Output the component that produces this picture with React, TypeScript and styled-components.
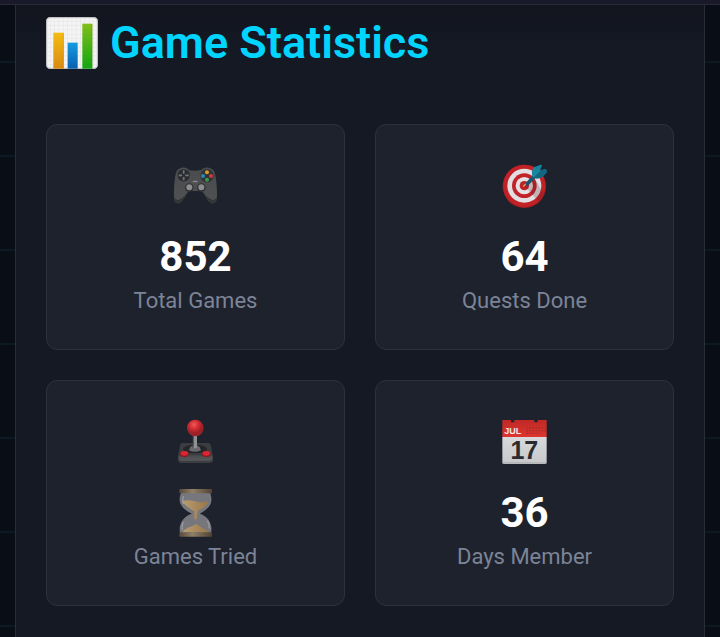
import type { ReactNode } from "react";
import styled, { createGlobalStyle } from "styled-components";

const GlobalStyle = createGlobalStyle`
  * {
    box-sizing: border-box;
  }
  body {
    margin: 0;
    background-color: #090d16;
    font-family: Roboto, sans-serif;
  }
  h2,
  p {
    margin: 0;
  }
`;

const Page = styled.div`
  display: flex;
  flex-direction: column;
  min-height: 100vh;
  background: repeating-linear-gradient(
    to bottom,
    #090d16 0,
    #090d16 61px,
    #0c1922 61px,
    #0c1922 63px,
    #090d16 63px,
    #090d16 94px
  );
`;

const TopBar = styled.header`
  height: 5px;
  background-color: #1a1929;
  border-bottom: 1px solid #2b2b38;
`;

const Panel = styled.main`
  flex: 1;
  margin: 0 15px;
  padding: 12px 30px 30px;
  background: linear-gradient(to bottom, #12141e 0, #141923 44px);
  border: solid #2a2d37;
  border-width: 0 1px;
`;

const Title = styled.h2`
  display: flex;
  align-items: center;
  gap: 12px;
  margin-bottom: 55px;
  color: #00d4ff;
  font-size: 45px;
  line-height: 52px;
  font-weight: 600;
`;

const StatsGrid = styled.section`
  display: grid;
  grid-template-columns: repeat(2, 1fr);
  gap: 30px;
`;

const StatCard = styled.div`
  display: flex;
  flex-direction: column;
  align-items: center;
  padding: 36px 30px 34px;
  background-color: #1e222d;
  border: 1px solid #2d313b;
  border-radius: 11px;
`;

const Icon = styled.svg<{ $size?: number; $faded?: boolean }>`
  display: block;
  flex: none;
  width: ${(props) => props.$size ?? 48}px;
  height: ${(props) => props.$size ?? 48}px;
  opacity: ${(props) => (props.$faded ? 0.8 : 1)};
`;

const StatValue = styled.div`
  margin-top: 24px;
  color: #fff;
  font-size: 42px;
  line-height: 48px;
  font-weight: 700;
`;

const StatLabel = styled.p`
  margin-top: 6px;
  color: #7c8497;
  font-size: 22px;
  line-height: 28px;
`;

function ChartIcon() {
  return (
    <Icon $size={52} viewBox="17 20 156 156" aria-hidden="true">
      <defs>
        <linearGradient id="barYellow" x2="0" y2="1">
          <stop stopColor="#f5bd12" />
          <stop offset="1" stopColor="#d98a12" />
        </linearGradient>
        <linearGradient id="barBlue" x2="0" y2="1">
          <stop stopColor="#159ce0" />
          <stop offset="1" stopColor="#0860b0" />
        </linearGradient>
        <linearGradient id="barGreen" x2="0" y2="1">
          <stop stopColor="#80bf18" />
          <stop offset="1" stopColor="#12a512" />
        </linearGradient>
        <pattern id="chartGrid" x="18" y="21" width="13" height="13" patternUnits="userSpaceOnUse">
          <path d="M0 12.5H13M12.5 0V13" stroke="#dcdcde" strokeWidth="1.5" />
        </pattern>
      </defs>
      <rect x="18" y="21" width="154" height="154" rx="11" fill="#f4f4f5" />
      <rect x="18" y="21" width="154" height="154" rx="11" fill="url(#chartGrid)" />
      <rect x="19" y="22" width="152" height="152" rx="10" fill="none" stroke="#c0c0c3" strokeWidth="3" />
      <rect x="39" y="67" width="31" height="108" fill="url(#barYellow)" />
      <rect x="82" y="97" width="30" height="78" fill="url(#barBlue)" />
      <rect x="126" y="40" width="30" height="135" fill="url(#barGreen)" />
      <path d="M69 68V175M155 41V175" stroke="#785c18" strokeWidth="2" opacity="0.4" />
    </Icon>
  );
}

function GamepadIcon() {
  return (
    <Icon viewBox="36 33 144 144" aria-hidden="true">
      <defs>
        <linearGradient id="padBody" x2="0" y2="1">
          <stop stopColor="#4a4b4d" />
          <stop offset="1" stopColor="#505152" />
        </linearGradient>
      </defs>
      <path
        d="M50 63C57 50 81 49 87 60Q105 64 124 60C130 49 154 50 162 63C168 77 171 105 171 139C171 153 166 160 158 160C149 160 141 148 133 132Q126 121 118 123H94Q86 121 79 132C71 148 63 160 54 160C46 160 41 153 42 139C42 106 44 78 50 63Z"
        fill="url(#padBody)"
      />
      <path d="M42 140Q43 160 54 160Q65 158 78 134Q64 146 55 150Q45 149 42 140M171 140Q170 160 158 160Q147 158 134 134Q148 146 157 150Q168 149 171 140Z" fill="#343537" />
      <circle cx="71" cy="76" r="20" fill="#2b2d31" stroke="#5e6063" strokeWidth="1.5" />
      <path d="M71 61V71M71 81V91M56 76H66M76 76H86" stroke="#747578" strokeWidth="5" />
      <circle cx="141" cy="77" r="20" fill="#303235" />
      <circle cx="141" cy="67" r="6" fill="#d49d2d" />
      <circle cx="129" cy="78" r="6" fill="#2e85b4" />
      <circle cx="153" cy="78" r="6" fill="#d33a3d" />
      <circle cx="141" cy="89" r="6" fill="#369b4b" />
      <rect x="98" y="92" width="15" height="5" rx="2" fill="#88898b" />
      <circle cx="88" cy="113" r="13" fill="#303134" />
      <circle cx="124" cy="113" r="13" fill="#303134" />
      <circle cx="88" cy="112" r="9" fill="#8d8e90" />
      <circle cx="124" cy="112" r="9" fill="#8d8e90" />
    </Icon>
  );
}

function TargetIcon() {
  return (
    <Icon viewBox="33 33 144 144" aria-hidden="true">
      <circle cx="103" cy="109" r="65" fill="#a91e23" />
      <circle cx="103" cy="107" r="63" fill="#c22126" />
      <circle cx="103" cy="107" r="51" fill="#e1dfe2" />
      <circle cx="103" cy="107" r="37" fill="#c22328" />
      <circle cx="103" cy="107" r="26" fill="#e5e2e4" />
      <circle cx="103" cy="107" r="14" fill="#bd2428" />
      <path d="M106 110L145 154L161 132L133 83Z" fill="#541d25" opacity="0.22" />
      <path d="M101 108L112 98" stroke="#d9a36d" strokeWidth="4" strokeLinecap="round" />
      <path d="M112 101L140 72" stroke="#17566e" strokeWidth="11" strokeLinecap="round" />
      <path d="M129 83Q121 64 132 52L152 44Q158 43 154 52L149 62L163 58Q174 58 169 68L158 80Q144 89 129 83Z" fill="#1685a2" />
      <path d="M129 83L149 62L163 58Q174 58 169 68L158 80Q144 89 129 83Z" fill="#126780" />
      <path d="M130 81L152 59" stroke="#3796ad" strokeWidth="2" />
    </Icon>
  );
}

function JoystickIcon() {
  return (
    <Icon viewBox="36 36 144 144" aria-hidden="true">
      <defs>
        <radialGradient id="stickBall" cx="0.42" cy="0.3">
          <stop stopColor="#ef595a" />
          <stop offset="0.55" stopColor="#d32c32" />
          <stop offset="1" stopColor="#9b2028" />
        </radialGradient>
        <linearGradient id="stickBase" x2="0" y2="1">
          <stop stopColor="#484a4d" />
          <stop offset="1" stopColor="#58595c" />
        </linearGradient>
      </defs>
      <path d="M67 114H145Q151 114 153 122L159 157V166Q159 173 151 174H62Q55 174 54 166V157L60 121Q62 114 67 114Z" fill="#3b3d40" />
      <path d="M56 151H157V160Q157 166 151 167H62Q56 166 56 160Z" fill="url(#stickBase)" />
      <ellipse cx="105" cy="132" rx="36" ry="13" fill="#24262a" />
      <path d="M91 126Q104 114 119 126L123 136Q105 145 87 136Z" fill="#686a6d" />
      <path d="M100 91H111V128Q105 132 100 128Z" fill="#909194" />
      <path d="M99 91V128" stroke="#393b3f" strokeWidth="3" />
      <circle cx="106" cy="69" r="25" fill="url(#stickBall)" />
      <ellipse cx="73" cy="147" rx="13" ry="9" fill="#8d1722" />
      <ellipse cx="139" cy="147" rx="13" ry="9" fill="#8d1722" />
      <ellipse cx="73" cy="145" rx="11" ry="7" fill="#db2632" />
      <ellipse cx="139" cy="145" rx="11" ry="7" fill="#db2632" />
    </Icon>
  );
}

function HourglassIcon() {
  return (
    <Icon $faded viewBox="36 249 144 144" aria-hidden="true">
      <defs>
        <linearGradient id="glassWood">
          <stop stopColor="#68533d" />
          <stop offset="0.4" stopColor="#ad9875" />
          <stop offset="1" stopColor="#5d4935" />
        </linearGradient>
        <linearGradient id="sand">
          <stop stopColor="#e0bd82" />
          <stop offset="1" stopColor="#b78c52" />
        </linearGradient>
      </defs>
      <path
        d="M65 260H149Q160 288 142 306Q128 318 117 323Q142 332 149 350Q156 366 152 380H61Q57 364 66 347Q75 331 98 323Q78 314 69 304Q53 284 65 260Z"
        fill="#8d8c91"
        stroke="#a5a5aa"
        strokeWidth="2"
      />
      <path d="M66 286Q85 280 105 286Q127 292 145 285Q142 302 113 314L110 340L103 340L103 316Q80 305 66 286Z" fill="url(#sand)" />
      <path d="M68 378Q75 367 96 361L109 354L147 378Z" fill="url(#sand)" />
      <path d="M71 270Q65 284 71 294M70 348Q64 361 68 371M142 344Q149 354 147 367" fill="none" stroke="#d5d5d9" strokeWidth="4" opacity="0.6" />
      <rect x="58" y="249" width="98" height="13" rx="2" fill="url(#glassWood)" />
      <rect x="58" y="379" width="98" height="13" rx="2" fill="url(#glassWood)" />
    </Icon>
  );
}

function CalendarIcon() {
  return (
    <Icon viewBox="33 36 144 144" aria-hidden="true">
      <defs>
        <linearGradient id="calendarTop" x2="0" y2="1">
          <stop stopColor="#bf2926" />
          <stop offset="1" stopColor="#df352e" />
        </linearGradient>
        <linearGradient id="calendarPaper" x2="0" y2="1">
          <stop stopColor="#d8d9db" />
          <stop offset="1" stopColor="#c7c8ca" />
        </linearGradient>
      </defs>
      <path d="M37 45H63V52H73V45H133V52H143V45H170V96H37Z" fill="url(#calendarTop)" />
      <path d="M37 96H170V172Q170 177 165 177H42Q37 177 37 172Z" fill="url(#calendarPaper)" />
      <path d="M38 174H169" stroke="#a6a7aa" strokeWidth="3" />
      <path d="M109 69H168M109 77H168M109 85H152" stroke="#a92e2c" strokeWidth="4" strokeDasharray="5 4" />
      <text x="43" y="87" fill="#f2e9e9" fontFamily="Liberation Sans, sans-serif" fontWeight="700" fontSize="27">
        JUL
      </text>
      <text x="103" y="162" fill="#292b2e" fontFamily="Liberation Sans, sans-serif" fontWeight="700" fontSize="75" textAnchor="middle">
        17
      </text>
    </Icon>
  );
}

interface Stat {
  label: string;
  value: ReactNode;
  icon: ReactNode;
}

const stats: Stat[] = [
  { label: "Total Games", value: "852", icon: <GamepadIcon /> },
  { label: "Quests Done", value: "64", icon: <TargetIcon /> },
  { label: "Games Tried", value: <HourglassIcon />, icon: <JoystickIcon /> },
  { label: "Days Member", value: "36", icon: <CalendarIcon /> },
];

export default function App() {
  return (
    <Page>
      <GlobalStyle />
      <TopBar />
      <Panel>
        <Title>
          <ChartIcon />
          Game Statistics
        </Title>
        <StatsGrid>
          {stats.map((stat) => (
            <StatCard key={stat.label}>
              {stat.icon}
              <StatValue>{stat.value}</StatValue>
              <StatLabel>{stat.label}</StatLabel>
            </StatCard>
          ))}
        </StatsGrid>
      </Panel>
    </Page>
  );
}
